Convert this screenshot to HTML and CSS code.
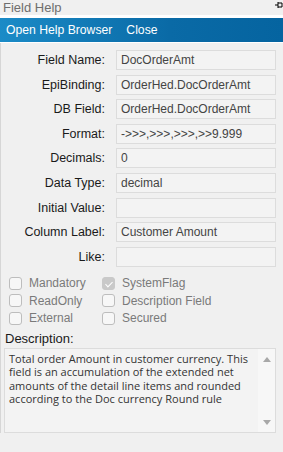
FILE: index.html
```html
<!DOCTYPE html>
<html lang="en">
<head>
    <meta charset="UTF-8">
    <title>Field Help</title>
    <link rel="stylesheet" href="styles.css">
</head>
<body>
    <div class="title-bar">
        <span class="title">Field Help</span>
        <svg class="pin" width="8" height="8" viewBox="0 0 8 8">
            <path d="M0 4h3M3 1v6M3 2h4M3 6h4M7 2v4" stroke="#000" stroke-width="1" fill="none"/>
        </svg>
    </div>

    <div class="tool-bar">
        <span>Open Help Browser</span>
        <span>Close</span>
    </div>

    <div class="panel">
        <div class="fields">
            <label>Field Name:</label>
            <div class="value">DocOrderAmt</div>
            <label>EpiBinding:</label>
            <div class="value">OrderHed.DocOrderAmt</div>
            <label>DB Field:</label>
            <div class="value">OrderHed.DocOrderAmt</div>
            <label>Format:</label>
            <div class="value format">-&gt;&gt;&gt;,&gt;&gt;&gt;,&gt;&gt;&gt;,&gt;&gt;9.999</div>
            <label>Decimals:</label>
            <div class="value">0</div>
            <label>Data Type:</label>
            <div class="value">decimal</div>
            <label>Initial Value:</label>
            <div class="value"></div>
            <label>Column Label:</label>
            <div class="value">Customer Amount</div>
            <label>Like:</label>
            <div class="value"></div>
        </div>

        <div class="flags">
            <div class="flag"><span class="box"></span>Mandatory</div>
            <div class="flag"><span class="box checked"></span>SystemFlag</div>
            <div class="flag"><span class="box"></span>ReadOnly</div>
            <div class="flag"><span class="box"></span>Description Field</div>
            <div class="flag"><span class="box"></span>External</div>
            <div class="flag"><span class="box"></span>Secured</div>
        </div>

        <div class="desc-label">Description:</div>
        <div class="desc-box">
            <div class="desc-text">Total order Amount in customer currency. This field is an accumulation of the extended net amounts of the detail line items and rounded according to the Doc currency Round rule</div>
            <div class="scroll">
                <span class="arrow up"></span>
                <span class="arrow down"></span>
            </div>
        </div>
    </div>
</body>
</html>
```

FILE: styles.css
```css
:root {
    --panel-bg: #f0f0f0;
    --field-bg: #f3f3f3;
    --field-border: #dcdcdc;
    --muted: #7a7a7a;
}

* {
    box-sizing: border-box;
    margin: 0;
    padding: 0;
}

body {
    font-family: 'Liberation Sans', Arial, sans-serif;
    background-color: var(--panel-bg);
    color: #1a1a1a;
    width: 283px;
    height: 452px;
    overflow: hidden;
}

.title-bar {
    height: 15px;
    background-color: var(--panel-bg);
    display: flex;
    justify-content: space-between;
    align-items: center;
    padding-left: 3px;
    border-bottom: 3px solid #fff;
    box-sizing: content-box;
}

.title {
    font-size: 13px;
    color: #6e6e6e;
}

.pin {
    margin-top: -6px;
}

.tool-bar {
    height: 24px;
    background: linear-gradient(to right, #1b8bc7, #0a6aa6 60%, #0564a0);
    color: #fff;
    font-size: 12.2px;
    display: flex;
    align-items: center;
    gap: 14px;
    padding-left: 6px;
    border-bottom: 1px solid #fff;
    box-sizing: content-box;
}

.panel {
    border-left: 1px solid #d6d6d6;
    padding: 7px 7px 0 3px;
}

.fields {
    display: grid;
    grid-template-columns: 101px 1fr;
    column-gap: 11px;
    row-gap: 4.6px;
    align-items: center;
}

.fields label {
    text-align: right;
    font-size: 12.5px;
    color: #1a1a1a;
}

.value {
    height: 20px;
    background-color: var(--field-bg);
    border: 1px solid var(--field-border);
    font-size: 12px;
    color: #444;
    padding-left: 4px;
    line-height: 19px;
}

.flags {
    display: grid;
    grid-template-columns: 93px 1fr;
    row-gap: 4.5px;
    margin-top: 10px;
    padding-left: 5px;
}

.flag {
    display: flex;
    align-items: center;
    font-size: 12px;
    color: var(--muted);
    height: 13px;
}

.box {
    width: 13px;
    height: 13px;
    border: 1px solid #bdbdbd;
    border-radius: 3px;
    background-color: #f7f7f7;
    margin-right: 7px;
    position: relative;
}

.box.checked {
    background-color: #c9c9c9;
    border-color: #c9c9c9;
}

.box.checked::after {
    content: '';
    position: absolute;
    left: 4px;
    top: 2px;
    width: 3px;
    height: 6px;
    border: solid #fff;
    border-width: 0 1px 1px 0;
    transform: rotate(45deg);
}

.desc-label {
    font-size: 13px;
    color: #1a1a1a;
    margin-top: 6px;
    padding-left: 1px;
}

.desc-box {
    display: flex;
    height: 85px;
    margin-top: 2px;
    border: 1px solid var(--field-border);
    background-color: var(--field-bg);
}

.desc-text {
    flex: 1;
    font-family: 'Open Sans', sans-serif;
    font-size: 11px;
    line-height: 13.4px;
    color: #333;
    padding: 3px 6px 0 4px;
}

.scroll {
    width: 17px;
    background-color: #f7f7f7;
    display: flex;
    flex-direction: column;
    justify-content: space-between;
    align-items: center;
    padding: 8px 0 7px;
}

.arrow {
    width: 0;
    height: 0;
    border-left: 4px solid transparent;
    border-right: 4px solid transparent;
}

.arrow.up {
    border-bottom: 5px solid #a8a8a8;
}

.arrow.down {
    border-top: 5px solid #a8a8a8;
}
```
